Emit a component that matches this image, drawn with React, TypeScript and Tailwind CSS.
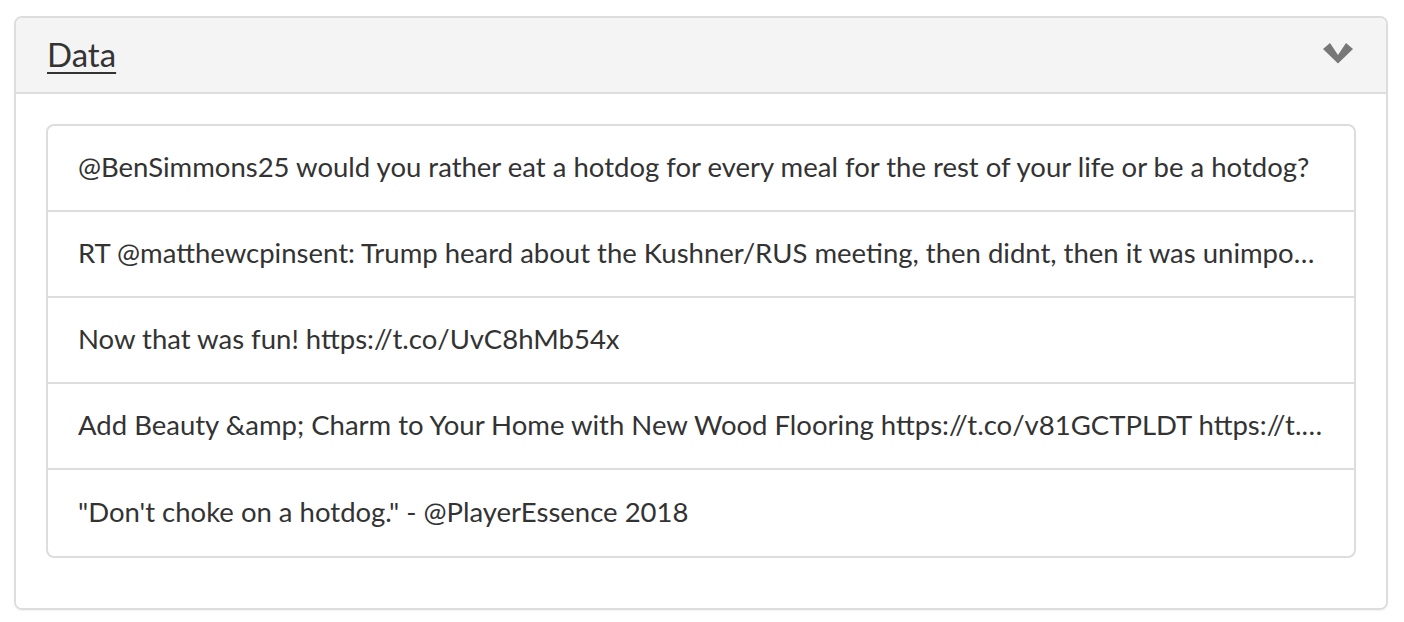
import React from 'react';

const tweets: string[] = [
  '@BenSimmons25 would you rather eat a hotdog for every meal for the rest of your life or be a hotdog?',
  'RT @matthewcpinsent: Trump heard about the Kushner/RUS meeting, then didnt, then it was unimportant, then he knew all about it and it was fine',
  'Now that was fun! https://t.co/UvC8hMb54x',
  'Add Beauty &amp; Charm to Your Home with New Wood Flooring https://t.co/v81GCTPLDT https://t.co/abcdEFGhij',
  '"Don\'t choke on a hotdog." - @PlayerEssence 2018',
];

const ChevronDown: React.FC = () => (
  <svg width="30" height="21" viewBox="0 0 30 21" className="block">
    <polygon points="0,6 7,0 15,12 23,0 30,6 15,20.5" fill="#777777" />
  </svg>
);

export default function App() {
  return (
    <div className="w-[1404px] h-[622px] bg-white pt-4 px-[14px] font-['Lato','Noto_Sans',sans-serif] text-[#333333]">
      <div className="w-[1374px] rounded-[8px] border-2 border-[#dddddd] overflow-hidden shadow-[0_1px_2px_rgba(0,0,0,0.06)]">
        <div className="h-[76px] bg-[#f4f4f4] border-b-2 border-[#dddddd] flex items-center justify-between pl-[31px] pr-[33px]">
          <a href="#" className="text-[33px] leading-none underline decoration-2 underline-offset-[5px] text-[#333333] -mt-[1px]">
            Data
          </a>
          <div className="-mt-[3px]">
            <ChevronDown />
          </div>
        </div>
        <div className="px-[30px] pt-[30px] pb-[50px] bg-white">
          <ul className="rounded-[8px] border-2 border-[#dddddd] bg-white">
            {tweets.map((t, i) => (
              <li
                key={i}
                className={`h-[86px] flex items-center px-[30px] text-[27.5px] ${i < tweets.length - 1 ? 'border-b-2 border-[#dddddd]' : ''}`}
              >
                <span className="block truncate -mt-[2px]">{t}</span>
              </li>
            ))}
          </ul>
        </div>
      </div>
    </div>
  );
}
